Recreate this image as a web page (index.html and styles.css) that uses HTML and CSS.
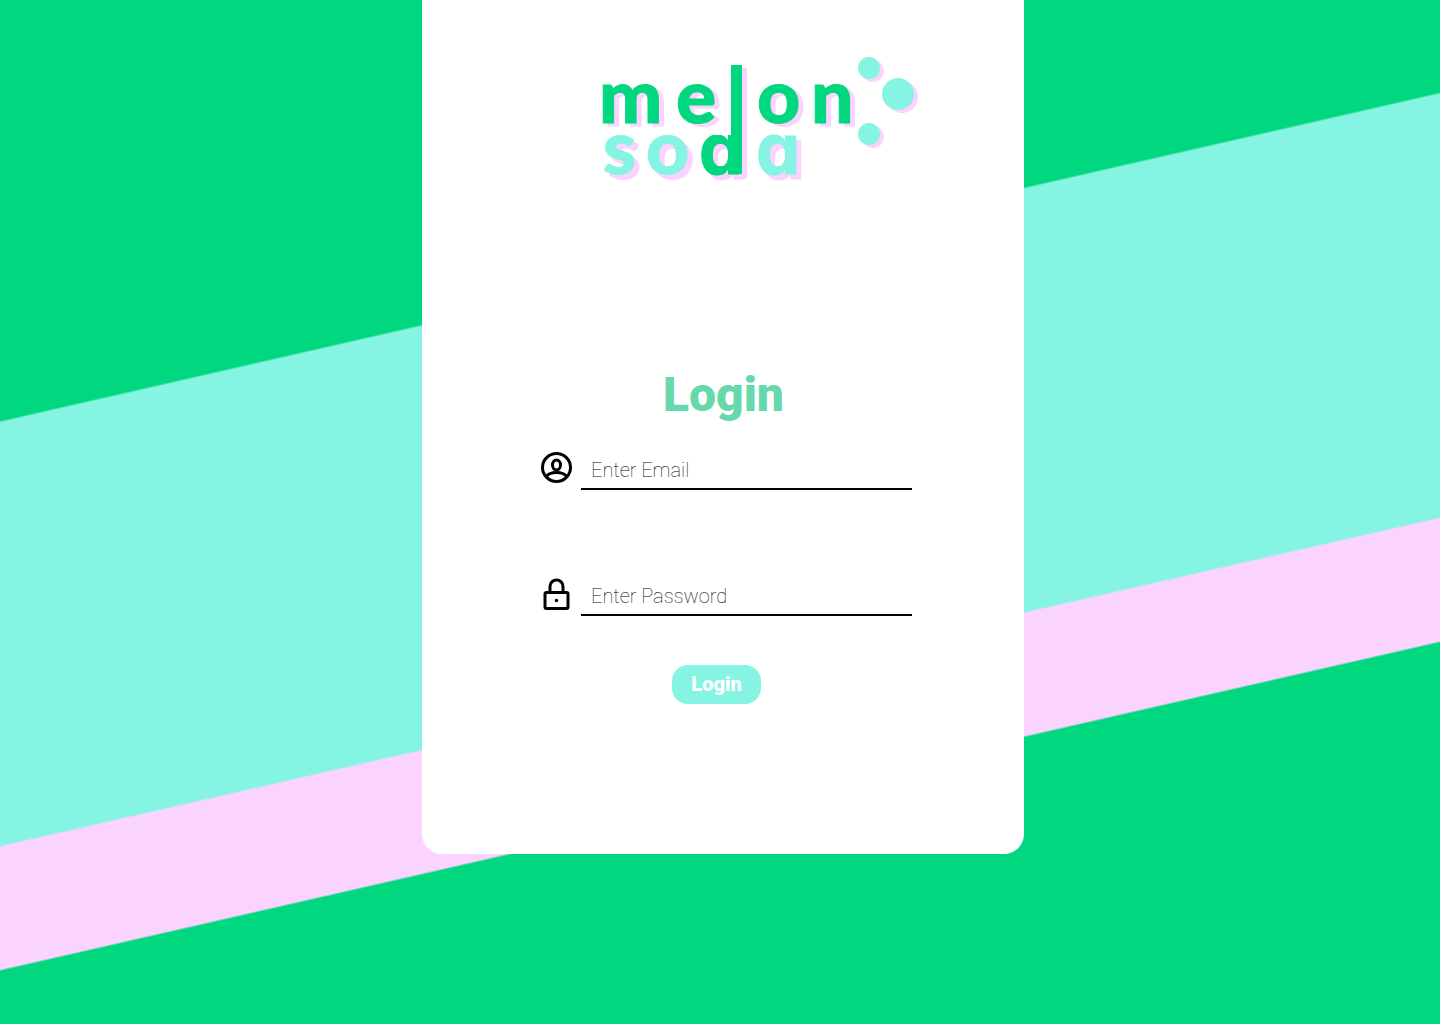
FILE: index.html
```html
<!DOCTYPE html>
<html lang="en">
<head>
  <meta charset="utf-8">
  <meta name="viewport" content="width=device-width, initial-scale=1">
  <title>Melon Soda</title>
  <link rel="stylesheet" href="styles.css">
</head>
<body>
  <main class="card">
    <svg class="logo" viewBox="0 0 320 128" role="img" aria-label="melon soda">
      <defs>
        <clipPath id="bowl">
          <rect x="90" y="79" width="52" height="45"/>
        </clipPath>
      </defs>
      <g class="shadow" aria-hidden="true">
        <circle cx="273" cy="15" r="11"/>
        <circle cx="302" cy="41" r="16"/>
        <circle cx="273" cy="81" r="11"/>
        <rect x="135" y="12" width="12" height="111"/>
      </g>
      <g class="word word-melon">
        <text y="67" x="-1 76">me</text>
        <text class="inter letter-l" y="67" x="127">l</text>
        <text y="67" x="157 211">on</text>
      </g>
      <g class="word word-soda">
        <text y="118" x="3 46">so</text>
        <text class="inter letter-d" y="118" x="99" clip-path="url(#bowl)">d</text>
        <text class="inter" y="118" x="156">a</text>
      </g>
      <rect class="green" x="131" y="9" width="11" height="109"/>
      <g class="aqua">
        <circle cx="269" cy="12" r="11"/>
        <circle cx="298" cy="38" r="16"/>
        <circle cx="269" cy="78" r="11"/>
      </g>
    </svg>

    <form class="login">
      <h1 class="title">Login</h1>
      <div class="field">
        <label for="email" aria-label="Email">
          <svg class="icon" viewBox="0 0 32 32">
            <circle cx="16" cy="15.500" r="14"/>
            <ellipse cx="16" cy="13" rx="4" ry="5"/>
            <path d="M6 24.500c2-3 5-4 10-4s8 1 10 4"/>
          </svg>
        </label>
        <input id="email" type="email" placeholder="Enter Email">
      </div>
      <div class="field">
        <label for="password" aria-label="Password">
          <svg class="icon" viewBox="0 0 32 32">
            <rect x="4.500" y="14.500" width="23" height="16" rx="1.500"/>
            <path d="M9.500 14V8.500a6.500 6.500 0 0 1 13 0V14"/>
            <circle class="dot" cx="16" cy="22.500" r="1.700"/>
          </svg>
        </label>
        <input id="password" type="password" placeholder="Enter Password">
      </div>
      <button class="submit" type="submit">Login</button>
    </form>
  </main>
</body>
</html>
```
FILE: styles.css
```css
:root {
  --green: #00d77e;
  --aqua: #86f4e2;
  --pink: #fad3fe;
}

* {
  box-sizing: border-box;
}

body {
  margin: 0;
  min-height: 100vh;
  padding-left: 6px;
  display: flex;
  justify-content: center;
  align-items: flex-start;
  font-family: Roboto, sans-serif;
  background: linear-gradient(167.15deg,
    var(--green) 410px, var(--aqua) 412px,
    var(--aqua) 824px, var(--pink) 826px,
    var(--pink) 945px, var(--green) 947px);
}

.card {
  width: 100%;
  max-width: 602px;
  padding: 56px 104px 150px 118px;
  display: flex;
  flex-direction: column;
  background: #fff;
  border-radius: 0 0 20px 20px;
}

.logo {
  width: 320px;
  max-width: 100%;
  align-self: flex-end;
  overflow: visible;
}

.word {
  font: 900 75px Lato, sans-serif;
  stroke-width: 1px;
}

.word-melon {
  fill: var(--green);
  stroke: var(--green);
  filter: drop-shadow(5px 3px 0 var(--pink));
}

.word-soda {
  fill: var(--aqua);
  stroke: var(--aqua);
  filter: drop-shadow(5px 5px 0 var(--pink));
}

.inter {
  font: 700 70px Inter, sans-serif;
  font-feature-settings: "cv11";
}

.letter-l {
  font-weight: 600;
  stroke: none;
}

.letter-d {
  fill: var(--green);
  stroke: var(--green);
}

.shadow {
  fill: var(--pink);
}

.green {
  fill: var(--green);
}

.aqua {
  fill: var(--aqua);
}

.login {
  display: flex;
  flex-direction: column;
  margin-top: 183px;
}

.title {
  margin: 0 13px 21px 0;
  font-size: 48px;
  font-weight: 900;
  line-height: 56px;
  text-align: center;
  color: #66d8ab;
}

.field {
  display: flex;
  gap: 8px;
  height: 46px;
  margin-bottom: 80px;
}

.field:last-of-type {
  margin-bottom: 49px;
}

.icon {
  display: block;
  width: 33px;
  height: 32px;
  margin-top: 8px;
  fill: none;
  stroke: #000;
  stroke-width: 3;
}

.icon .dot {
  fill: #000;
  stroke: none;
}

.field input {
  flex: 1;
  min-width: 0;
  max-width: 331px;
  padding: 8px 10px 0;
  border: 0;
  border-bottom: 2px solid #000;
  background: none;
  font: 300 20px Roboto, sans-serif;
  color: #000;
  outline: none;
}

.field input::placeholder {
  color: #000;
  font-weight: 100;
  opacity: 1;
}

.submit {
  align-self: center;
  margin-right: 27px;
  padding: 8px 19px;
  border: 0;
  border-radius: 16px;
  background: var(--aqua);
  color: #fff;
  font: 900 20px/23px Roboto, sans-serif;
}
```
